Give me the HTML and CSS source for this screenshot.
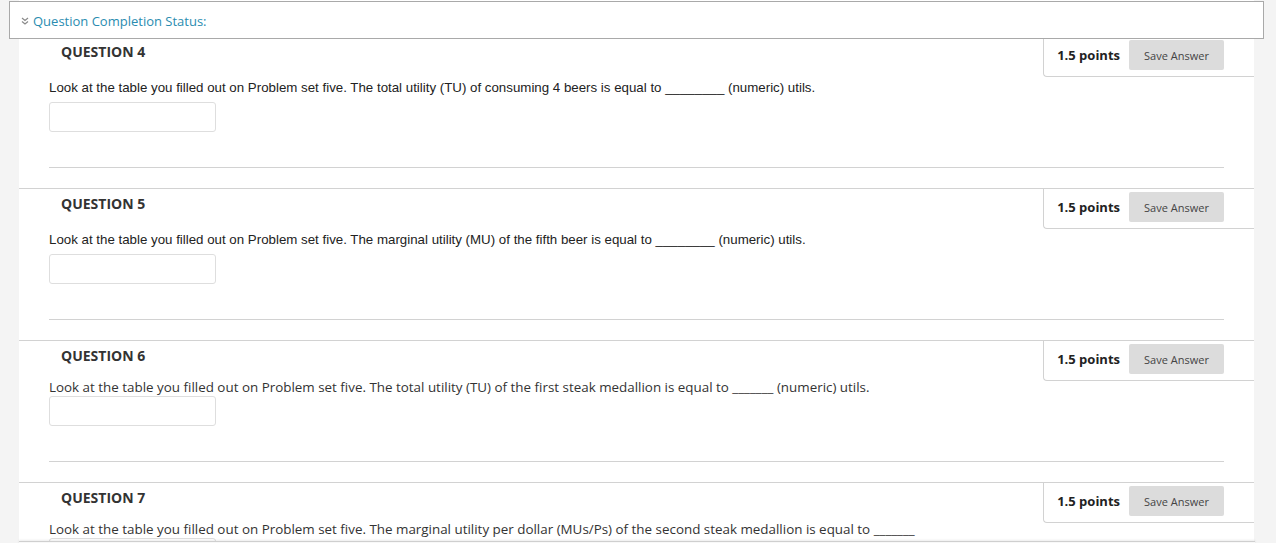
FILE: index.html
```html
<!DOCTYPE html>
<html lang="en">
<head>
  <meta charset="UTF-8" />
  <title>Take Test</title>
  <link rel="stylesheet" href="styles.css">
</head>
<body>

  <div id="completion-status">
    <svg class="chevrons" width="8" height="8" viewBox="0 0 8 8">
      <path d="M1 1 L4 3.5 L7 1 M1 4.5 L4 7 L7 4.5" fill="none" stroke="#8a8a8a" stroke-width="1.2"/>
    </svg>
    <span>Question Completion Status:</span>
  </div>

  <div id="test-content">

    <div class="question">
      <div class="points-box">
        <span class="points">1.5 points</span>
        <button class="save-btn">Save Answer</button>
      </div>
      <h3>QUESTION 4</h3>
      <p class="q-text arial">Look at the table you filled out on Problem set five. The total utility (TU) of consuming 4 beers is equal to ________ (numeric) utils.</p>
      <input class="answer" type="text" />
      <hr>
    </div>

    <div class="question">
      <div class="points-box">
        <span class="points">1.5 points</span>
        <button class="save-btn">Save Answer</button>
      </div>
      <h3>QUESTION 5</h3>
      <p class="q-text arial">Look at the table you filled out on Problem set five. The marginal utility (MU) of the fifth beer is equal to ________ (numeric) utils.</p>
      <input class="answer" type="text" />
      <hr>
    </div>

    <div class="question">
      <div class="points-box">
        <span class="points">1.5 points</span>
        <button class="save-btn">Save Answer</button>
      </div>
      <h3>QUESTION 6</h3>
      <p class="q-text">Look at the table you filled out on Problem set five. The total utility (TU) of the first steak medallion is equal to _______ (numeric) utils.</p>
      <input class="answer" type="text" />
      <hr>
    </div>

    <div class="question">
      <div class="points-box">
        <span class="points">1.5 points</span>
        <button class="save-btn">Save Answer</button>
      </div>
      <h3>QUESTION 7</h3>
      <p class="q-text">Look at the table you filled out on Problem set five. The marginal utility per dollar (MUs/Ps) of the second steak medallion is equal to _______</p>
      <input class="answer" type="text" />
      <hr>
    </div>

  </div>

  <div id="submit-bar"></div>

</body>
</html>
```

FILE: styles.css
```css
body {
  margin: 0;
  background-color: #f4f4f4;
  font-family: "Open Sans", Arial, sans-serif;
  color: #333;
}

#completion-status {
  position: fixed;
  top: 1px;
  left: 9px;
  width: 1255px;
  height: 38px;
  box-sizing: border-box;
  background-color: #fff;
  border: 1px solid #a9a9a9;
  display: flex;
  align-items: center;
  gap: 4px;
  padding: 1px 0 0 11px;
  font-size: 13px;
  color: #2a8cb0;
  z-index: 5;
}

.chevrons {
  margin-top: 1px;
}

#test-content {
  margin-left: 19px;
  width: 1235px;
  padding-top: 36px;
  background-color: #fff;
}

.question {
  border-top: 1px solid #d2d2d2;
  padding: 0 30px;
}

.question h3 {
  margin: 5px 0 0 12px;
  font-size: 14px;
  line-height: 20px;
  font-weight: bold;
  color: #333;
}

.points-box {
  float: right;
  margin-right: -30px;
  display: flex;
  align-items: center;
  gap: 9px;
  padding: 3px 30px 6px 13px;
  border-left: 1px solid #d2d2d2;
  border-bottom: 1px solid #d2d2d2;
  border-bottom-left-radius: 4px;
}

.points {
  font-size: 13px;
  font-weight: bold;
  color: #222;
}

.save-btn {
  width: 95px;
  height: 30px;
  border: none;
  border-radius: 2px;
  background-color: #dcdcdc;
  font-family: "Open Sans", Arial, sans-serif;
  font-size: 11px;
  color: #444;
  padding: 0;
}

.q-text {
  margin: 12px 0 0 0;
  font-size: 13.4px;
  line-height: 18px;
  color: #333;
}

.q-text.arial {
  margin-top: 17px;
  margin-bottom: 5px;
  font-family: "Liberation Sans", Arial, sans-serif;
  font-size: 13.3px;
  color: #222;
}

.answer {
  display: block;
  width: 167px;
  height: 30px;
  box-sizing: border-box;
  border: 1px solid #dedede;
  border-radius: 3px;
  margin: 0;
}

.question hr {
  margin: 35px 0 20px 0;
  border: none;
  border-top: 1px solid #d2d2d2;
  height: 0;
  clear: both;
}

#submit-bar {
  position: fixed;
  top: 541px;
  left: 19px;
  width: 1236px;
  height: 10px;
  border-top: 1px solid #cfcfcf;
  background-color: #f8f8f8;
  box-shadow: 0 -1px 2px rgba(0, 0, 0, 0.08);
}
```
